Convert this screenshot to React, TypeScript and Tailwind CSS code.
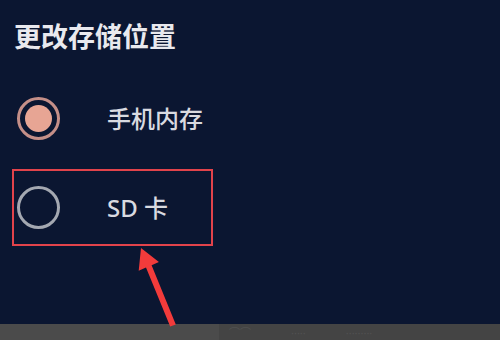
import React from "react";

function Radio({ checked }: { checked: boolean }) {
  return (
    <div
      className={
        "flex h-[43px] w-[43px] shrink-0 items-center justify-center rounded-full border-[3px] " +
        (checked ? "border-[#c58f88]" : "border-[#a4a8b1]")
      }
    >
      {checked && <div className="h-[27px] w-[27px] rounded-full bg-[#e7a594]" />}
    </div>
  );
}

function Row({ label, checked, boxed }: { label: string; checked: boolean; boxed?: boolean }) {
  return (
    <div
      className={
        "ml-[12px] flex h-[77px] w-[201px] items-center border-2 pl-[3px] " +
        (boxed ? "border-[#e2434b]" : "border-transparent")
      }
    >
      <Radio checked={checked} />
      <span className="ml-[47px] text-[24px] font-medium leading-none text-[#d9dae0]">{label}</span>
    </div>
  );
}

export default function App() {
  return (
    <div
      className="relative flex h-[340px] w-[500px] flex-col overflow-hidden bg-[#0b1631]"
      style={{ fontFamily: '"Noto Sans", "Noto Sans CJK SC", sans-serif' }}
    >
      <div className="flex flex-1 flex-col">
        <div className="pl-[14px] pt-[22px] text-[27px] font-bold leading-[30px] text-[#e9e9ee]">
          更改存储位置
        </div>
        <div className="mt-[28px] flex flex-col gap-[12px]">
          <Row label="手机内存" checked />
          <Row label="SD 卡" checked={false} boxed />
        </div>
      </div>
      <div className="flex h-[16px] shrink-0">
        <div className="w-[219px] bg-[#4b4b4b]" />
        <div className="flex flex-1 items-center gap-[40px] bg-[#444444] pl-[10px] text-[11px] leading-none text-[#515151]">
          <span>⌒⌒</span>
          <span>·····</span>
          <span>·········</span>
        </div>
      </div>
      <svg className="pointer-events-none absolute left-0 top-0" width="500" height="340" viewBox="0 0 500 340">
        <polygon
          points="141,248 158.9,262.1 151.6,265.2 175.8,324.5 170.2,326.5 146,267.6 138.7,270.7"
          fill="#f23b3b"
        />
      </svg>
    </div>
  );
}
